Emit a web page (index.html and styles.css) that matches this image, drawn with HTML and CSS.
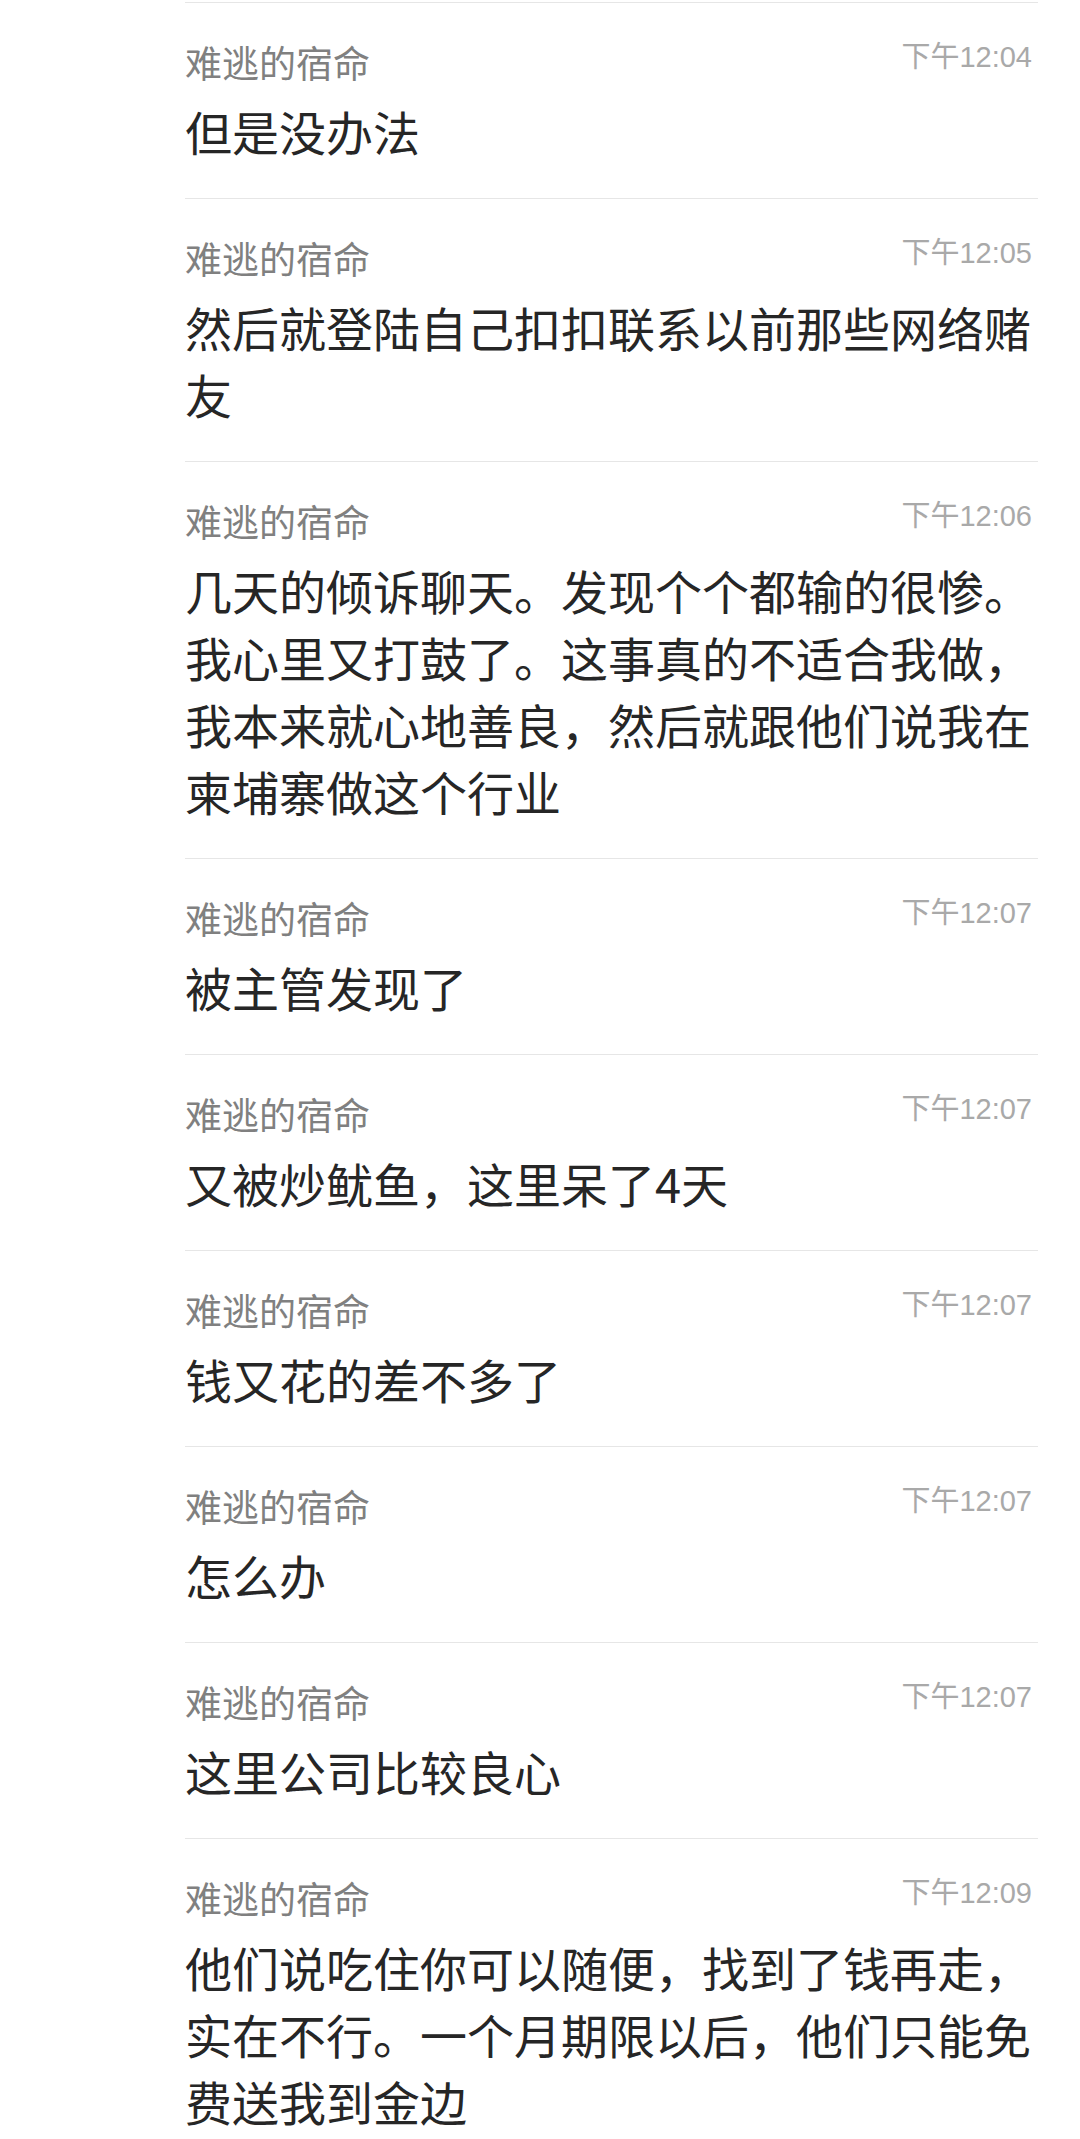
FILE: index.html
```html
<!DOCTYPE html>
<html lang="zh-CN">
<head>
<meta charset="utf-8">
<title>聊天记录</title>
<link rel="stylesheet" href="styles.css">
</head>
<body>
<ul class="msgs">
  <li class="msg">
    <div class="head"><span class="name">难逃的宿命</span><span class="time">下午12:04</span></div>
    <p class="text">但是没办法</p>
  </li>
  <li class="msg">
    <div class="head"><span class="name">难逃的宿命</span><span class="time">下午12:05</span></div>
    <p class="text">然后就登陆自己扣扣联系以前那些网络赌友</p>
  </li>
  <li class="msg">
    <div class="head"><span class="name">难逃的宿命</span><span class="time">下午12:06</span></div>
    <p class="text">几天的倾诉聊天。发现个个都输的很惨。我心里又打鼓了。这事真的不适合我做，我本来就心地善良，然后就跟他们说我在柬埔寨做这个行业</p>
  </li>
  <li class="msg">
    <div class="head"><span class="name">难逃的宿命</span><span class="time">下午12:07</span></div>
    <p class="text">被主管发现了</p>
  </li>
  <li class="msg">
    <div class="head"><span class="name">难逃的宿命</span><span class="time">下午12:07</span></div>
    <p class="text">又被炒鱿鱼，这里呆了4天</p>
  </li>
  <li class="msg">
    <div class="head"><span class="name">难逃的宿命</span><span class="time">下午12:07</span></div>
    <p class="text">钱又花的差不多了</p>
  </li>
  <li class="msg">
    <div class="head"><span class="name">难逃的宿命</span><span class="time">下午12:07</span></div>
    <p class="text">怎么办</p>
  </li>
  <li class="msg">
    <div class="head"><span class="name">难逃的宿命</span><span class="time">下午12:07</span></div>
    <p class="text">这里公司比较良心</p>
  </li>
  <li class="msg">
    <div class="head"><span class="name">难逃的宿命</span><span class="time">下午12:09</span></div>
    <p class="text">他们说吃住你可以随便，找到了钱再走，实在不行。一个月期限以后，他们只能免费送我到金边</p>
  </li>
</ul>
</body>
</html>
```

FILE: styles.css
```css
html, body {
  margin: 0;
  padding: 0;
  background: #ffffff;
}

body {
  font-family: "Noto Sans CJK SC", "Noto Sans", sans-serif;
  overflow: hidden;
}

.msgs {
  list-style: none;
  margin: 0;
  padding: 2px 42px 0 185px;
}

.msg {
  border-top: 1px solid #e6e6e6;
  padding: 35px 0 34px;
}

.head {
  display: flex;
  justify-content: space-between;
  align-items: flex-start;
  height: 48px;
}

.name {
  font-size: 37px;
  line-height: 48px;
  color: #808080;
}

.time {
  font-family: "Liberation Sans", "Noto Sans CJK SC", sans-serif;
  font-size: 29px;
  line-height: 38px;
  color: #a9a9a9;
  margin-right: 6px;
}

.text {
  margin: 11px 0 0;
  font-size: 47px;
  line-height: 67px;
  color: #262626;
}
```
